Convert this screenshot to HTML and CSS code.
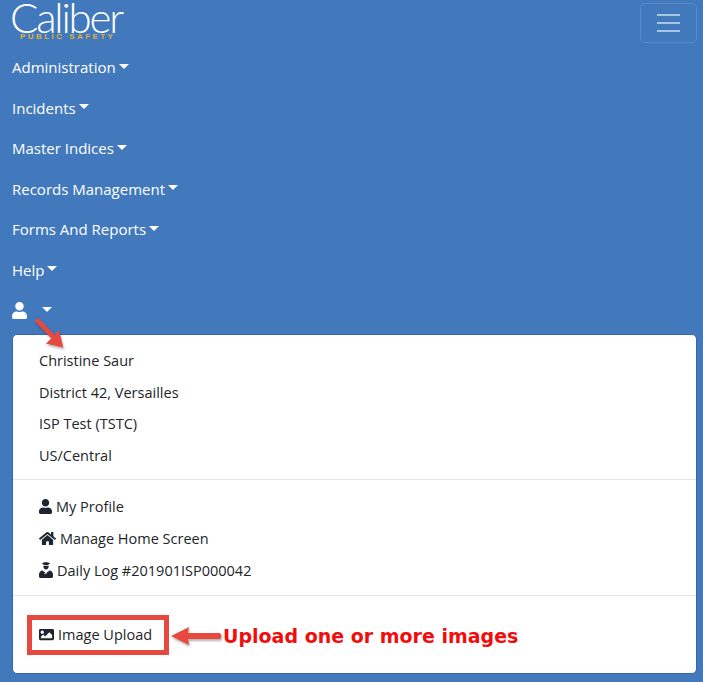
FILE: index.html
```
<!DOCTYPE html>
<html lang="en">
<head>
<meta charset="utf-8">
<title>Caliber Public Safety</title>
<link rel="stylesheet" href="styles.css">
</head>
<body>
<nav class="navbar">
  <div class="topbar">
    <a class="brand">
      <span class="brand-name">Caliber</span>
      <span class="brand-sub">PUBLIC SAFETY</span>
    </a>
    <button class="toggler" aria-label="Menu"><span></span><span></span><span></span></button>
  </div>
  <ul class="nav">
    <li class="nav-item">Administration<i class="caret"></i></li>
    <li class="nav-item">Incidents<i class="caret"></i></li>
    <li class="nav-item">Master Indices<i class="caret"></i></li>
    <li class="nav-item">Records Management<i class="caret"></i></li>
    <li class="nav-item">Forms And Reports<i class="caret"></i></li>
    <li class="nav-item">Help<i class="caret"></i></li>
    <li class="nav-item user-item">
      <svg class="user-icon" viewBox="0 0 448 512"><path d="M224 256c70.700 0 128-57.300 128-128S294.700 0 224 0 96 57.300 96 128s57.300 128 128 128zm89.600 32h-16.700c-22.200 10.200-46.900 16-72.900 16s-50.600-5.800-72.900-16h-16.700C60.200 288 0 348.200 0 422.400V464c0 26.500 21.500 48 48 48h352c26.500 0 48-21.500 48-48v-41.600c0-74.200-60.200-134.400-134.400-134.400z"/></svg>
      <i class="caret user-caret"></i>
    </li>
  </ul>
  <div class="menu">
    <div class="menu-group first">
      <div class="menu-text">Christine Saur</div>
      <div class="menu-text">District 42, Versailles</div>
      <div class="menu-text">ISP Test (TSTC)</div>
      <div class="menu-text">US/Central</div>
    </div>
    <div class="menu-group second">
      <a class="menu-link">
        <svg class="icon icon-user" viewBox="0 0 448 512"><path d="M224 256c70.700 0 128-57.300 128-128S294.700 0 224 0 96 57.300 96 128s57.300 128 128 128zm89.600 32h-16.700c-22.200 10.200-46.900 16-72.900 16s-50.600-5.800-72.900-16h-16.700C60.200 288 0 348.200 0 422.400V464c0 26.500 21.500 48 48 48h352c26.500 0 48-21.500 48-48v-41.600c0-74.200-60.200-134.400-134.400-134.400z"/></svg>My Profile</a>
      <a class="menu-link">
        <svg class="icon icon-home" viewBox="0 0 576 512"><path d="M280.370 148.260L96 300.110V464a16 16 0 0 0 16 16l112.060-.29a16 16 0 0 0 15.920-16V368a16 16 0 0 1 16-16h64a16 16 0 0 1 16 16v95.640a16 16 0 0 0 16 16.050L464 480a16 16 0 0 0 16-16V300L295.670 148.260a12.190 12.190 0 0 0-15.300 0zM571.600 251.470L488 182.560V44.050a12 12 0 0 0-12-12h-56a12 12 0 0 0-12 12v72.610L318.470 43a48 48 0 0 0-61 0L4.340 251.470a12 12 0 0 0-1.600 16.900l25.500 31A12 12 0 0 0 45.150 301l235.220-193.740a12.190 12.190 0 0 1 15.300 0L530.900 301a12 12 0 0 0 16.900-1.600l25.500-31a12 12 0 0 0-1.700-16.930z"/></svg>Manage Home Screen</a>
      <a class="menu-link">
        <svg class="icon icon-police" viewBox="0 0 448 512"><path d="M224 0L104 34v26l40 14v30h160V74l40-14V34zM136 128c0 56 38 112 88 112s88-56 88-112zM120 272C50 272 0 328 0 400v64c0 26 22 48 48 48h352c26 0 48-22 48-48v-64c0-72-50-128-120-128l-104 120zM176 300l32 60-32 40zM272 300l-32 60 32 40z"/></svg>Daily Log #201901ISP000042</a>
    </div>
    <div class="menu-group third">
      <a class="menu-link upload">
        <svg class="icon icon-image" viewBox="0 0 512 512"><path d="M464 448H48c-26.510 0-48-21.490-48-48V112c0-26.510 21.490-48 48-48h416c26.510 0 48 21.490 48 48v288c0 26.510-21.490 48-48 48zM112 120c-30.928 0-56 25.072-56 56s25.072 56 56 56 56-25.072 56-56-25.072-56-56-56zM64 384h384V272l-87.515-87.515c-4.686-4.686-12.284-4.686-16.971 0L208 320l-55.515-55.515c-4.686-4.686-12.284-4.686-16.971 0L64 336v48z"/></svg>Image Upload</a>
      <svg class="callout-arrow" viewBox="0 0 54 24"><path d="M2 12 L20 3 L19 9 L51 9 Q53.500 12 51 15 L19 15 L20 21 Z"/></svg>
      <span class="callout-text">Upload one or more images</span>
    </div>
  </div>
  <svg class="pointer-arrow" viewBox="0 0 46 46"><path d="M6 1 L1 6 L25 31 L17 38 L42 44 L36 19 L30 26 Z"/></svg>
</nav>
</body>
</html>
```
FILE: styles.css
```
*, *::before { box-sizing: border-box; }
html, body { margin: 0; padding: 0; }
body {
  width: 703px;
  height: 682px;
  overflow: hidden;
  background: #4279bd;
  font-family: "Open Sans", "Noto Sans", sans-serif;
  font-size: 14.500px;
  color: #212529;
}
.navbar { position: relative; height: 682px; padding: 3px 6px 0 12px; }
.topbar { display: flex; justify-content: space-between; align-items: flex-start; height: 44px; }
.brand { display: flex; flex-direction: column; align-items: flex-start; margin-left: -2px; }
.brand-name {
  font-family: "Lato", sans-serif;
  font-weight: 300;
  font-size: 42px;
  line-height: 28px;
  letter-spacing: -2.200px;
  color: #fff;
}
.brand-sub {
  margin: 2px 0 0 10px;
  font-family: "Liberation Sans", sans-serif;
  font-size: 8px;
  line-height: 8px;
  letter-spacing: 2.450px;
  font-weight: 700;
  color: #dcb042;
}
.toggler {
  width: 57px;
  height: 40px;
  background: none;
  border: 1px solid #5a8bc7;
  border-radius: 5px;
  display: flex;
  flex-direction: column;
  align-items: center;
  justify-content: center;
  gap: 6px;
  padding: 0;
}
.toggler span { display: block; width: 23px; height: 2px; background: #a8c2e2; }
.nav { list-style: none; margin: 0; padding: 0; }
.nav-item {
  height: 40.500px;
  display: flex;
  align-items: center;
  color: #fff;
  font-size: 15px;
}
.caret {
  display: inline-block;
  margin-left: 3px;
  margin-top: -2px;
  border-top: 5px solid #fff;
  border-left: 5px solid transparent;
  border-right: 5px solid transparent;
}
.user-icon { width: 15px; height: 17px; fill: #fff; }
.user-caret { margin-left: 15px; }
.menu {
  margin-top: 3.500px;
  width: 685px;
  height: 340px;
  background: #fff;
  border: 1px solid #3768a6;
  border-radius: 5px;
  padding: 0 26px;
}
.menu-group { margin: 0 -26px; padding: 0 26px; }
.first { padding-top: 10px; height: 145px; border-bottom: 1px solid #e4e6e8; }
.second { padding-top: 10px; height: 116px; border-bottom: 1px solid #e4e6e8; }
.third { position: relative; padding-top: 23px; height: 77px; }
.menu-text, .menu-link { display: flex; align-items: center; height: 31.500px; white-space: nowrap; }
.second .menu-link { height: 32px; }
.icon { fill: #1f2530; height: 15px; margin-right: 4px; flex: none; }
.icon-user { width: 13px; }
.icon-home { width: 17px; }
.icon-police { width: 14px; height: 16px; }
.icon-image { width: 15px; margin-right: 4px; }
.upload { position: relative; width: 115px; }
.upload::before {
  content: "";
  position: absolute;
  left: -12px;
  top: -4px;
  width: 142px;
  height: 40px;
  border: 5px solid #e8493f;
}
.callout-arrow { position: absolute; left: 156px; top: 28px; width: 54px; height: 24px; fill: #e8493f; filter: drop-shadow(1px 2px 1px rgba(0,0,0,.3)); }
.callout-text {
  position: absolute;
  left: 210px;
  top: 28px;
  font-family: "DejaVu Sans", sans-serif;
  font-weight: 700;
  font-size: 19px;
  line-height: 24px;
  color: #f20d0d;
  white-space: nowrap;
}
.pointer-arrow { position: absolute; left: 34px; top: 316px; width: 32px; height: 34px; fill: #e8493f; filter: drop-shadow(1px 2px 1px rgba(0,0,0,.3)); }
```
